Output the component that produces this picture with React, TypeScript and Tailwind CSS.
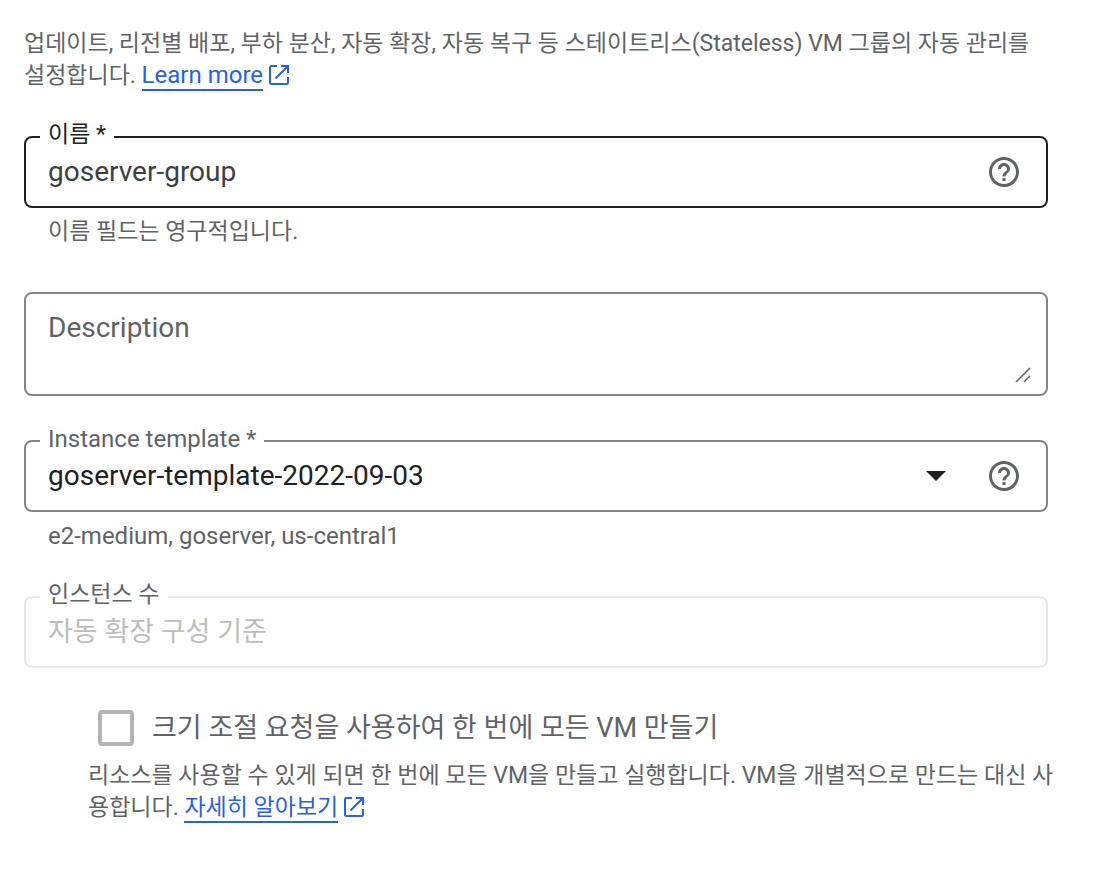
import { useState } from "react";
import type { ReactNode } from "react";

function HelpIcon() {
  return (
    <svg viewBox="0 0 24 24" className="size-9" fill="currentColor" aria-hidden="true">
      <path d="M11 18h2v-2h-2v2zm1-16C6.480 2 2 6.480 2 12s4.480 10 10 10 10-4.480 10-10S17.520 2 12 2zm0 18c-4.410 0-8-3.590-8-8s3.590-8 8-8 8 3.590 8 8-3.590 8-8 8zm0-14c-2.210 0-4 1.790-4 4h2c0-1.100.9-2 2-2s2 .9 2 2c0 2-3 1.750-3 5h2c0-2.250 3-2.500 3-5 0-2.210-1.790-4-4-4z" />
    </svg>
  );
}

function HelpButton({ label }: { label: string }) {
  return (
    <button type="button" aria-label={label} className="flex shrink-0 items-center justify-center text-[#5f6368]">
      <HelpIcon />
    </button>
  );
}

function OpenInNewIcon() {
  return (
    <svg viewBox="0 0 20 20" className="ml-1.5 inline-block size-5 align-[-2px] text-[#2962d9]" fill="none" stroke="currentColor" strokeWidth="2" aria-hidden="true">
      <path d="M8 1H2.500Q1 1 1 2.500v15Q1 19 2.500 19h15Q19 19 19 17.500V12" />
      <path d="M12 1h7v7M19 1L6.500 13.500" />
    </svg>
  );
}

function DocLink({ size, children }: { size: string; children: ReactNode }) {
  return (
    <>
      <a href="#docs" className={`border-b-2 border-[#2962d9] text-[#2962d9] ${size}`}>
        {children}
      </a>
      <OpenInNewIcon />
    </>
  );
}

type FieldProps = { id: string; label: string; tone: string; labelTone: string; children: ReactNode };

function OutlinedField({ id, label, tone, labelTone, children }: FieldProps) {
  return (
    <fieldset className={`min-w-0 rounded-lg border-2 pr-6 pb-4 pl-3.5 ${tone}`}>
      <legend className={`px-2 pt-0.5 pb-1.5 leading-[26px] ${labelTone}`}>
        <label htmlFor={id}>{label}</label>
      </legend>
      <div className="flex h-9 items-center gap-6 pl-2">{children}</div>
    </fieldset>
  );
}

export default function App() {
  const [name, setName] = useState("goserver-group");
  const [description, setDescription] = useState("");
  const [bulk, setBulk] = useState(false);

  return (
    <main className="bg-white pt-7 pr-16 pb-16 pl-6 font-['Roboto','Noto_Sans_CJK_KR',sans-serif] text-[23px] leading-8 text-[#5f6368]">
      <p className="break-keep">
        업데이트, 리전별 배포, 부하 분산, 자동 확장, 자동 복구 등 스테이트리스(Stateless) VM 그룹의 자동 관리를 설정합니다.{" "}
        <DocLink size="text-[24px] leading-none">Learn more</DocLink>
      </p>

      <form className="mt-7" onSubmit={(e) => e.preventDefault()}>
        <OutlinedField id="name" label="이름 *" tone="border-[#202124]" labelTone="text-[23px] text-[#202124]">
          <input
            id="name"
            value={name}
            onChange={(e) => setName(e.target.value)}
            className="min-w-0 flex-1 bg-transparent text-[28px] leading-9 text-[#3c4043] outline-none"
          />
          <HelpButton label="이름 도움말" />
        </OutlinedField>
        <p className="mt-2 pl-6">이름 필드는 영구적입니다.</p>

        <div className="relative mt-11">
          <textarea
            aria-label="Description"
            placeholder="Description"
            value={description}
            onChange={(e) => setDescription(e.target.value)}
            className="block h-[104px] w-full resize-none rounded-lg border-2 border-[#80868b] px-[22px] py-4 text-[28px] leading-9 text-[#3c4043] outline-none placeholder:text-[#5f6368]"
          />
          <svg viewBox="0 0 16 16" className="absolute right-[17px] bottom-[13px] size-4" fill="none" stroke="#5f6368" strokeWidth="1.500" aria-hidden="true">
            <path d="M1 15L15 1M9 15l6-6" />
          </svg>
        </div>

        <div className="mt-7">
          <OutlinedField id="template" label="Instance template *" tone="border-[#80868b]" labelTone="text-[24px] text-[#5f6368]">
            <div className="relative flex min-w-0 flex-1 items-center">
              <select id="template" className="w-full appearance-none bg-transparent text-[28px] leading-9 text-[#202124] outline-none">
                <option>goserver-template-2022-09-03</option>
              </select>
              <svg viewBox="0 0 20 10" className="pointer-events-none absolute right-4 h-2.5 w-5" fill="#202124" aria-hidden="true">
                <path d="M0 0h20L10 10z" />
              </svg>
            </div>
            <HelpButton label="Instance template 도움말" />
          </OutlinedField>
        </div>
        <p className="mt-2 pl-6 text-[24px]">e2-medium, goserver, us-central1</p>

        <div className="mt-7">
          <OutlinedField id="count" label="인스턴스 수" tone="border-[#e8e8e8]" labelTone="text-[23px] text-[#5f6368]">
            <input
              id="count"
              disabled
              placeholder="자동 확장 구성 기준"
              className="min-w-0 flex-1 bg-transparent text-[27px] leading-9 placeholder:text-[#bdbdbd]"
            />
          </OutlinedField>
        </div>

        <div className="mt-10 pl-16">
          <div className="flex items-center gap-[18px] pl-2.5">
            <input
              id="bulk"
              type="checkbox"
              checked={bulk}
              onChange={(e) => setBulk(e.target.checked)}
              className="size-9 shrink-0 appearance-none rounded-sm border-4 border-[#b4b5b7] checked:bg-[#2962d9]"
            />
            <label htmlFor="bulk" className="text-[27px] leading-10">
              크기 조절 요청을 사용하여 한 번에 모든 VM 만들기
            </label>
          </div>
          <p className="mt-3 -mr-2">
            리소스를 사용할 수 있게 되면 한 번에 모든 VM을 만들고 실행합니다. VM을 개별적으로 만드는 대신 사용합니다.{" "}
            <DocLink size="text-[23px]">자세히 알아보기</DocLink>
          </p>
        </div>
      </form>
    </main>
  );
}
